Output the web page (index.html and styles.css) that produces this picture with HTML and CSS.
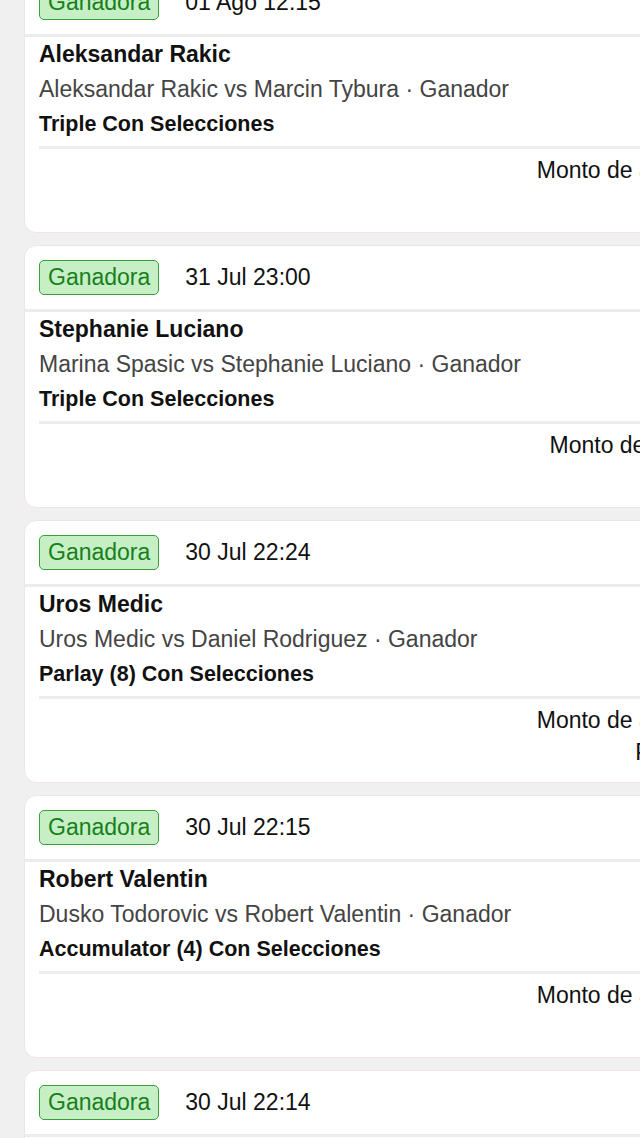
FILE: index.html
```html
<!DOCTYPE html>
<html lang="es">
<head>
    <meta charset="UTF-8">
    <meta name="viewport" content="width=device-width, initial-scale=1.0">
    <title>Mis apuestas</title>
    <link rel="stylesheet" href="styles.css">
</head>
<body>
    <div class="list">
        <div class="card">
            <div class="card-head">
                <span class="badge">Ganadora</span>
                <span class="date">01 Ago 12:15</span>
            </div>
            <div class="card-body">
                <div class="pick">Aleksandar Rakic</div>
                <div class="match">Aleksandar Rakic vs Marcin Tybura · Ganador</div>
                <div class="bet-type">Triple Con Selecciones</div>
            </div>
            <div class="card-foot">
                <div class="amount">Monto de apuesta: $20.00</div>
                <div class="payout">Pago: $40.00</div>
            </div>
        </div>

        <div class="card">
            <div class="card-head">
                <span class="badge">Ganadora</span>
                <span class="date">31 Jul 23:00</span>
            </div>
            <div class="card-body">
                <div class="pick">Stephanie Luciano</div>
                <div class="match">Marina Spasic vs Stephanie Luciano · Ganador</div>
                <div class="bet-type">Triple Con Selecciones</div>
            </div>
            <div class="card-foot">
                <div class="amount">Monto de apuesta: $5.00</div>
                <div class="payout">Pago: $10.00</div>
            </div>
        </div>

        <div class="card">
            <div class="card-head">
                <span class="badge">Ganadora</span>
                <span class="date">30 Jul 22:24</span>
            </div>
            <div class="card-body">
                <div class="pick">Uros Medic</div>
                <div class="match">Uros Medic vs Daniel Rodriguez · Ganador</div>
                <div class="bet-type">Parlay (8) Con Selecciones</div>
            </div>
            <div class="card-foot">
                <div class="amount">Monto de apuesta: $20.00</div>
                <div class="payout">Pago: $1,040.00</div>
            </div>
        </div>

        <div class="card">
            <div class="card-head">
                <span class="badge">Ganadora</span>
                <span class="date">30 Jul 22:15</span>
            </div>
            <div class="card-body">
                <div class="pick">Robert Valentin</div>
                <div class="match">Dusko Todorovic vs Robert Valentin · Ganador</div>
                <div class="bet-type">Accumulator (4) Con Selecciones</div>
            </div>
            <div class="card-foot">
                <div class="amount">Monto de apuesta: $20.00</div>
                <div class="payout">Pago: $60.00</div>
            </div>
        </div>

        <div class="card">
            <div class="card-head">
                <span class="badge">Ganadora</span>
                <span class="date">30 Jul 22:14</span>
            </div>
            <div class="card-body">
                <div class="pick">Robert Valentin</div>
                <div class="match">Dusko Todorovic vs Robert Valentin · Ganador</div>
                <div class="bet-type">Triple Con Selecciones</div>
            </div>
            <div class="card-foot">
                <div class="amount">Monto de apuesta: $20.00</div>
                <div class="payout">Pago: $40.00</div>
            </div>
        </div>
    </div>
</body>
</html>
```

FILE: styles.css
```css
html, body {
    overflow: hidden;
}

body {
    font-family: 'Liberation Sans', Arial, sans-serif;
    margin: 0;
    padding: 0;
    background-color: #f0f0f0;
    color: #111;
}

.list {
    display: flex;
    flex-direction: column;
    gap: 12px;
    margin-top: -30px;
    padding-left: 24px;
}

.card {
    width: 795px;
    flex-shrink: 0;
    box-sizing: border-box;
    background-color: white;
    border: 1px solid #f5e2e2;
    border-radius: 12px;
}

.card-head {
    display: flex;
    align-items: center;
    gap: 26px;
    padding: 14px 14px;
    border-bottom: 3px solid #ececec;
}

.badge {
    box-sizing: border-box;
    height: 35px;
    line-height: 32px;
    padding: 0 8px;
    font-size: 23px;
    color: #17801a;
    background-color: #c6efc6;
    border: 1.5px solid #3a9e3c;
    border-radius: 5px;
}

.date {
    font-size: 23px;
}

.card-body {
    padding: 0 14px;
}

.card-body > div {
    line-height: 35px;
    white-space: nowrap;
}

.pick {
    font-size: 23px;
    font-weight: bold;
}

.match {
    font-size: 23px;
    color: #444;
}

.bet-type {
    font-size: 21.5px;
    font-weight: bold;
    border-bottom: 3px solid #ededed;
    padding-bottom: 4px;
}

.card-foot {
    display: flex;
    flex-direction: column;
    align-items: flex-end;
    padding: 5px 14px 14px;
}

.card-foot div {
    font-size: 23px;
    line-height: 32px;
    white-space: nowrap;
}
```
